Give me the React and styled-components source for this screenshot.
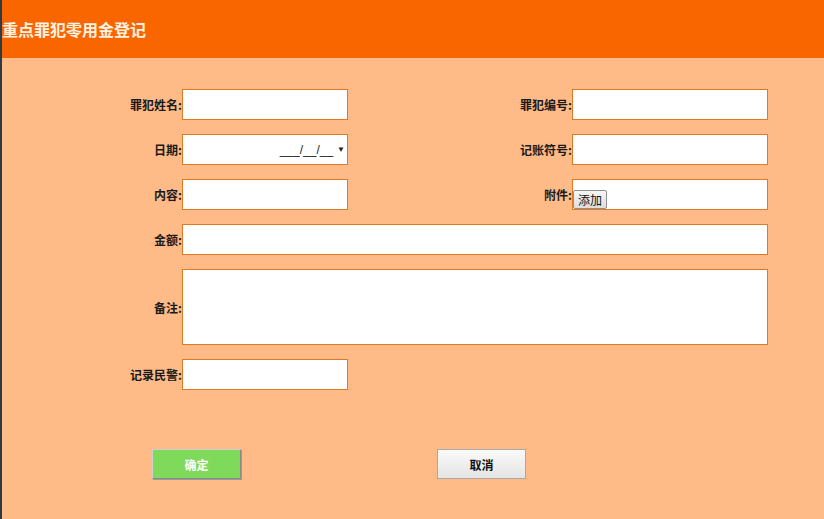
import React from 'react';
import styled, { createGlobalStyle } from 'styled-components';

const Global = createGlobalStyle`
  html, body {
    margin: 0;
    padding: 0;
    background: #ffbb87;
  }
  body {
    font-family: "Liberation Sans", "Noto Sans CJK SC", sans-serif;
  }
`;

const Page = styled.div`
  min-height: 519px;
  background: #ffbb87;
  border-left: 2px solid #2e3a44;
  box-sizing: border-box;
`;

const Header = styled.header`
  height: 58px;
  background: #f96600;
  display: flex;
  align-items: center;
  h1 {
    margin: 0;
    font-size: 16px;
    font-weight: bold;
    color: #fff3e0;
    font-family: "Noto Sans CJK SC", sans-serif;
  }
`;

const Form = styled.form`
  display: grid;
  grid-template-columns: 180px 166px 224px 196px;
  row-gap: 14px;
  padding-top: 31px;
`;

const Label = styled.label`
  font-family: "Noto Sans CJK SC", sans-serif;
  font-size: 12px;
  font-weight: bold;
  color: #1a1a1a;
  display: flex;
  align-items: center;
  justify-content: flex-end;
  height: ${(p) => p.h || 31}px;
`;

const Field = styled.div`
  grid-column: ${(p) => (p.wide ? 'span 3' : 'auto')};
  height: ${(p) => p.h || 31}px;
  box-sizing: border-box;
  background: #fff;
  border: 1px solid #e07a22;
  display: flex;
  align-items: ${(p) => p.align || 'center'};
`;

const DateMask = styled.div`
  flex: 1;
  display: flex;
  justify-content: flex-end;
  align-items: center;
  padding-right: 2px;
  font-size: 12px;
  color: #222;
  gap: 4px;
  span.arrow {
    font-size: 8px;
  }
`;

const AddButton = styled.button`
  font-family: "Noto Sans CJK SC", sans-serif;
  font-size: 12px;
  height: 19px;
  padding: 0 4px;
  margin: 0;
  background: linear-gradient(#f6f6f6, #dedede);
  border: 1px solid #8f8f8f;
  border-radius: 2px;
  color: #111;
  line-height: 17px;
`;

const Actions = styled.div`
  display: flex;
  padding: 59px 0 0 150px;
  gap: 196px;
`;

const Button = styled.button`
  width: 89px;
  height: 30px;
  font-family: "Noto Sans CJK SC", sans-serif;
  font-size: 12px;
  font-weight: bold;
  cursor: pointer;
  ${(p) =>
    p.primary
      ? `
    background: #7fd95a;
    color: #fff;
    border: 1px solid #cfcfcf;
    border-right-color: #8a8a8a;
    border-bottom-color: #8a8a8a;
    box-shadow: 1px 1px 0 #9a9a9a;
  `
      : `
    background: linear-gradient(#fafafa, #e4e4e4);
    color: #111;
    border: 1px solid #a8a8a8;
  `}
`;

export default function App() {
  return (
    <>
      <Global />
      <Page>
        <Header>
          <h1>重点罪犯零用金登记</h1>
        </Header>
        <Form>
          <Label>罪犯姓名:</Label>
          <Field />
          <Label>罪犯编号:</Label>
          <Field />

          <Label>日期:</Label>
          <Field>
            <DateMask>
              <span>___/__/__</span>
              <span className="arrow">▼</span>
            </DateMask>
          </Field>
          <Label>记账符号:</Label>
          <Field />

          <Label>内容:</Label>
          <Field />
          <Label>附件:</Label>
          <Field align="flex-end">
            <AddButton type="button">添加</AddButton>
          </Field>

          <Label>金额:</Label>
          <Field wide />

          <Label h={76}>备注:</Label>
          <Field wide h={76} />

          <Label>记录民警:</Label>
          <Field />
        </Form>
        <Actions>
          <Button type="button" primary>确定</Button>
          <Button type="button">取消</Button>
        </Actions>
      </Page>
    </>
  );
}
